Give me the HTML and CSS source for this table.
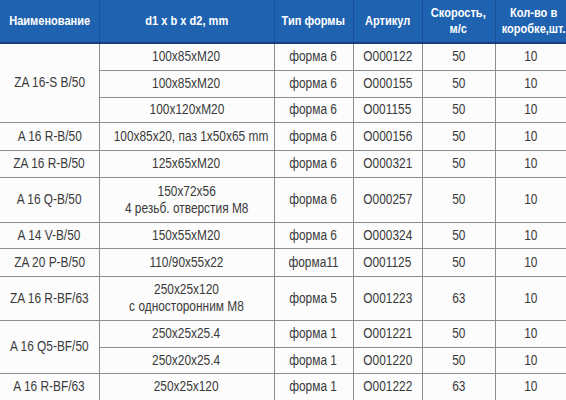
FILE: index.html
```html
<!DOCTYPE html>
<html lang="ru">
<head>
<meta charset="utf-8">
<link rel="stylesheet" href="styles.css">
</head>
<body>
<table class="spec">
  <colgroup>
    <col class="c1"><col class="c2"><col class="c3"><col class="c4"><col class="c5"><col class="c6">
  </colgroup>
  <thead>
    <tr class="head">
      <th><span class="t">Наименование</span></th>
      <th><span class="t">d1 x b x d2, mm</span></th>
      <th><span class="t">Тип формы</span></th>
      <th><span class="t">Артикул</span></th>
      <th><span class="t">Скорость,<br>м/с</span></th>
      <th><span class="t">Кол-во в<br>коробке,шт.</span></th>
    </tr>
  </thead>
  <tbody>
    <tr class="h27">
      <td rowspan="3"><span class="t">ZA 16-S B/50</span></td>
      <td><span class="t">100x85xM20</span></td>
      <td><span class="t">форма 6</span></td>
      <td><span class="t">O000122</span></td>
      <td><span class="t">50</span></td>
      <td><span class="t">10</span></td>
    </tr>
    <tr class="h27">
      <td><span class="t">100x85xM20</span></td>
      <td><span class="t">форма 6</span></td>
      <td><span class="t">O000155</span></td>
      <td><span class="t">50</span></td>
      <td><span class="t">10</span></td>
    </tr>
    <tr class="h25">
      <td><span class="t">100x120xM20</span></td>
      <td><span class="t">форма 6</span></td>
      <td><span class="t">O001155</span></td>
      <td><span class="t">50</span></td>
      <td><span class="t">10</span></td>
    </tr>
    <tr class="h28">
      <td><span class="t">A 16 R-B/50</span></td>
      <td><span class="t">100x85x20, паз 1x50x65 mm</span></td>
      <td><span class="t">форма 6</span></td>
      <td><span class="t">O000156</span></td>
      <td><span class="t">50</span></td>
      <td><span class="t">10</span></td>
    </tr>
    <tr class="h27">
      <td><span class="t">ZA 16 R-B/50</span></td>
      <td><span class="t">125x65xM20</span></td>
      <td><span class="t">форма 6</span></td>
      <td><span class="t">O000321</span></td>
      <td><span class="t">50</span></td>
      <td><span class="t">10</span></td>
    </tr>
    <tr class="h45">
      <td><span class="t">A 16 Q-B/50</span></td>
      <td><span class="t">150x72x56<br>4 резьб. отверстия M8</span></td>
      <td><span class="t">форма 6</span></td>
      <td><span class="t">O000257</span></td>
      <td><span class="t">50</span></td>
      <td><span class="t">10</span></td>
    </tr>
    <tr class="h26">
      <td><span class="t">A 14 V-B/50</span></td>
      <td><span class="t">150x55xM20</span></td>
      <td><span class="t">форма 6</span></td>
      <td><span class="t">O000324</span></td>
      <td><span class="t">50</span></td>
      <td><span class="t">10</span></td>
    </tr>
    <tr class="h28">
      <td><span class="t">ZA 20 P-B/50</span></td>
      <td><span class="t">110/90x55x22</span></td>
      <td><span class="t">форма11</span></td>
      <td><span class="t">O001125</span></td>
      <td><span class="t">50</span></td>
      <td><span class="t">10</span></td>
    </tr>
    <tr class="h44">
      <td><span class="t">ZA 16 R-BF/63</span></td>
      <td><span class="t">250x25x120<br>с односторонним M8</span></td>
      <td><span class="t">форма 5</span></td>
      <td><span class="t">O001223</span></td>
      <td><span class="t">63</span></td>
      <td><span class="t">10</span></td>
    </tr>
    <tr class="h27">
      <td rowspan="2"><span class="t">A 16 Q5-BF/50</span></td>
      <td><span class="t">250x25x25.4</span></td>
      <td><span class="t">форма 1</span></td>
      <td><span class="t">O001221</span></td>
      <td><span class="t">50</span></td>
      <td><span class="t">10</span></td>
    </tr>
    <tr class="h26">
      <td><span class="t">250x20x25.4</span></td>
      <td><span class="t">форма 1</span></td>
      <td><span class="t">O001220</span></td>
      <td><span class="t">50</span></td>
      <td><span class="t">10</span></td>
    </tr>
    <tr class="h27 last">
      <td><span class="t">A 16 R-BF/63</span></td>
      <td><span class="t">250x25x120</span></td>
      <td><span class="t">форма 1</span></td>
      <td><span class="t">O001222</span></td>
      <td><span class="t">63</span></td>
      <td><span class="t">10</span></td>
    </tr>
  </tbody>
</table>
</body>
</html>
```
FILE: styles.css
```css
html, body {
  margin: 0;
  padding: 0;
  background: #fcfcfc;
}
body {
  width: 566px;
  height: 400px;
  overflow: hidden;
  font-family: "Liberation Sans", Arial, sans-serif;
}
.spec {
  width: 566px;
  table-layout: fixed;
  border-collapse: collapse;
  border-spacing: 0;
}
.c1 { width: 99px; }
.c2 { width: 175px; }
.c3 { width: 79px; }
.c4 { width: 69px; }
.c5 { width: 73px; }
.c6 { width: 71px; }

.spec th,
.spec td {
  padding: 0;
  text-align: center;
  vertical-align: middle;
  white-space: nowrap;
}
.t {
  display: inline-block;
  transform: scaleX(0.85);
  transform-origin: center;
}
.head {
  height: 43px;
  background: #1f63b0;
}
.spec th {
  color: #ffffff;
  font-weight: bold;
  font-size: 13px;
  line-height: 16px;
  border-left: 1px solid #1b4f94;
  border-bottom: 2px solid #1a3e7a;
}
.spec th:first-child { border-left: none; }

.spec td {
  color: #3a3a3a;
  font-size: 14px;
  line-height: 17px;
  border: 1px solid #8e8e8e;
}
.spec td:first-child { border-left: none; }
.spec td:last-child { border-right: none; }
.last td { border-bottom: none; }

.h25 { height: 25px; }
.h26 { height: 26px; }
.h27 { height: 27px; }
.h28 { height: 28px; }
.h44 { height: 44px; }
.h45 { height: 45px; }
```
